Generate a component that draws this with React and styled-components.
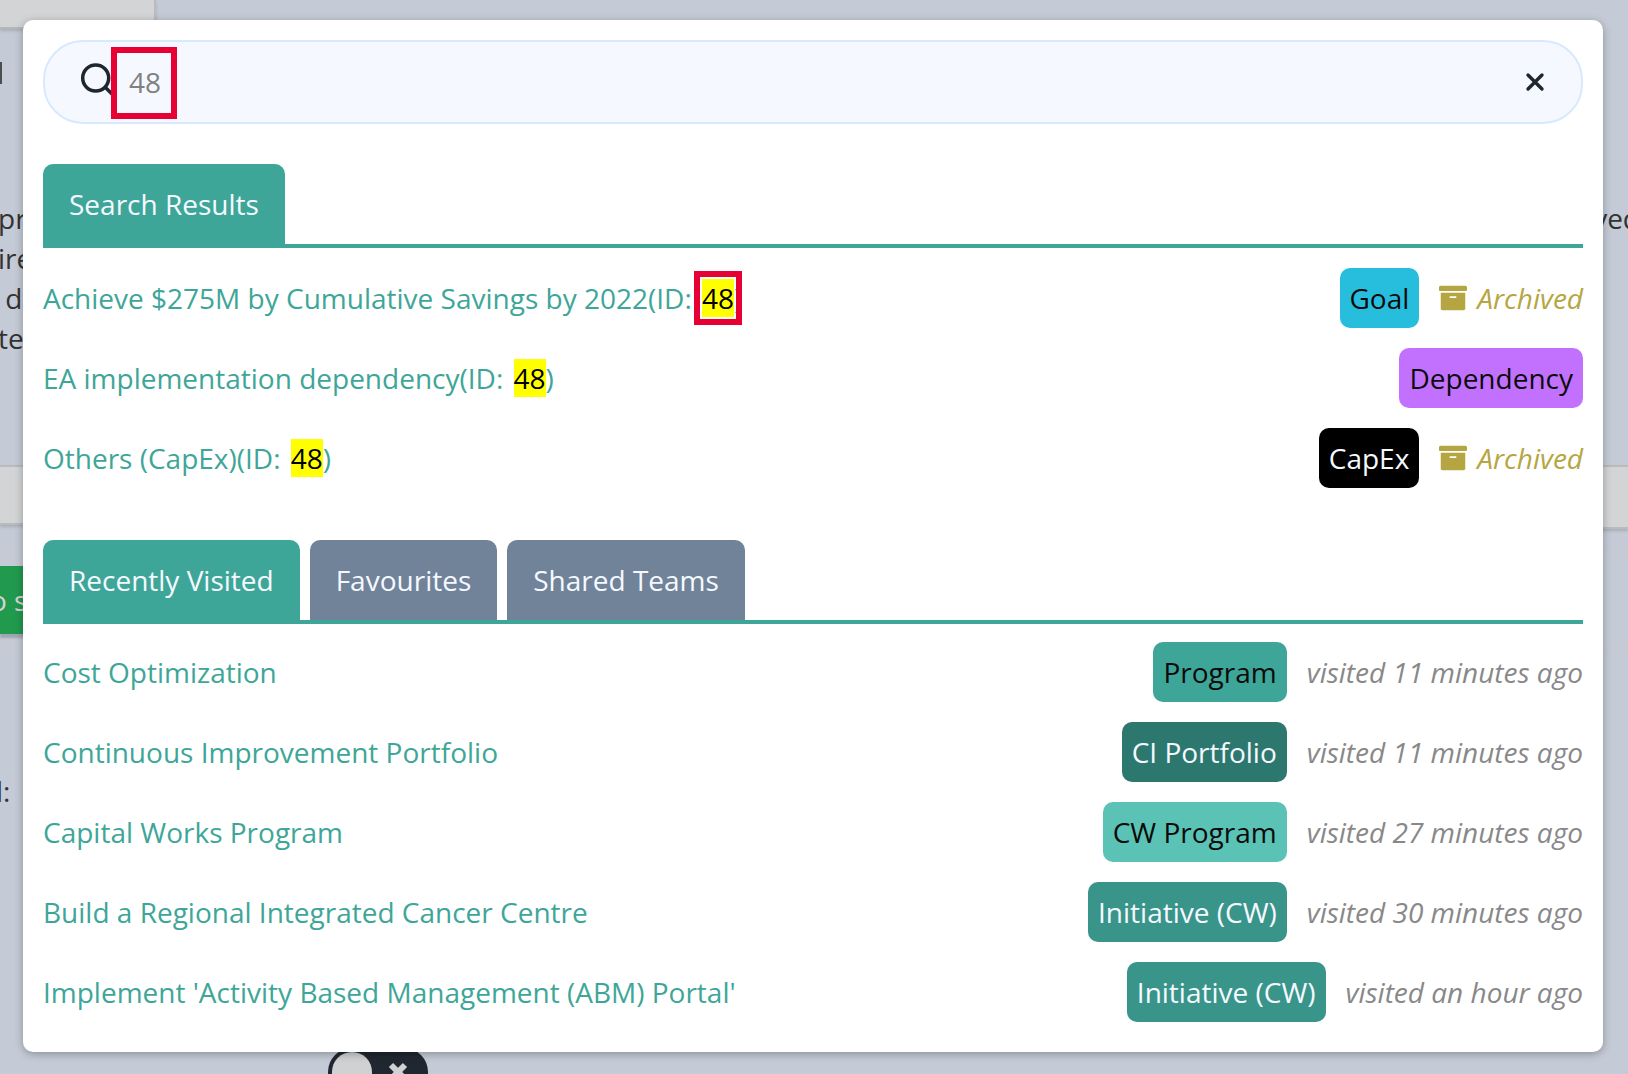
import React from "react";
import styled, { createGlobalStyle, css } from "styled-components";
import { FaArchive } from "react-icons/fa";

const GlobalStyle = createGlobalStyle`
  *,
  *::before,
  *::after {
    box-sizing: border-box;
  }
  body {
    margin: 0;
    font-family: "Open Sans", "Noto Sans", sans-serif;
    font-size: 28px;
    line-height: 40px;
    color: #333;
  }
  button,
  input {
    font: inherit;
  }
`;

const Page = styled.div`
  position: relative;
  height: 100vh;
  overflow: hidden;
  background: #c5cbd6;
`;

/* page behind the dialog */
const Backdrop = styled.div`
  display: flex;
  flex-direction: column;
`;
const TopPanel = styled.div`
  width: 156px;
  height: 29px;
  background: #d3d4d5;
  border-right: 2px solid #b9bbbd;
  border-bottom: 2px solid #b5b7b9;
  box-shadow: 0 2px 3px rgba(0, 0, 0, 0.15);
`;
const Stub = styled.div`
  width: 2px;
  height: 22px;
  margin-top: 33px;
  background: #4a4d52;
`;
const Copy = styled.div`
  display: flex;
  justify-content: space-between;
  margin: 114px -12px 0 -2px;
  height: 160px;
`;
const Lines = styled.div`
  display: flex;
  flex-direction: column;
  white-space: pre;
`;
const Cards = styled.div`
  display: flex;
  align-items: flex-start;
  justify-content: space-between;
  height: 83px;
  margin-top: 107px;
`;
const Card = styled.div`
  width: 50%;
  height: ${(p) => (p.$tall ? 64 : 60)}px;
  background: #d3d4d5;
  border: solid #b9bbbd;
  border-width: 2px 0;
  box-shadow: 0 2px 3px rgba(0, 0, 0, 0.15);
`;
const Dashes = styled.div`
  height: 2px;
  background: repeating-linear-gradient(
    to right,
    transparent 0 4px,
    #cbc9c8 4px 10px
  );
`;
const SaveButton = styled.button`
  align-self: flex-start;
  width: 80px;
  height: 68px;
  margin: 16px 0;
  padding: 0;
  border: 0;
  background: #219a4e;
  box-shadow: 0 4px 2px #a0a6af;
  color: #d3d4d5;
  text-align: left;
  text-indent: -10px;
`;
const FieldLabel = styled.div`
  margin-top: 119px;
  text-indent: -4px;
`;
const Toggle = styled.div`
  display: flex;
  align-items: center;
  justify-content: space-between;
  width: 100px;
  height: 48px;
  margin: 237px 0 0 328px;
  padding: 0 20px 0 4px;
  border-radius: 24px;
  background: #212730;
`;
const Knob = styled.span`
  width: 40px;
  height: 40px;
  border-radius: 50%;
  background: #d0d1d2;
`;

/* dialog */
const Dialog = styled.section`
  position: absolute;
  top: 20px;
  left: 23px;
  right: 25px;
  padding: 20px;
  border-radius: 10px;
  background: #fff;
  box-shadow: 0 2px 8px rgba(0, 0, 0, 0.3);
`;
const SearchBar = styled.div`
  display: flex;
  align-items: center;
  height: 84px;
  padding: 0 30px 0 34px;
  border: 2px solid #d6e9ff;
  border-radius: 40px;
  background: #f5f9ff;
`;
const SearchIcon = styled.svg`
  flex: none;
  width: 32px;
  height: 80px;
`;
const outline = css`
  content: "";
  position: absolute;
  border: 6px solid #e60033;
`;
const SearchField = styled.label`
  position: relative;
  display: flex;
  flex: 1;
  align-items: center;
  height: 80px;
  &::before {
    ${outline}
    top: 5px;
    left: 0;
    width: 66px;
    height: 72px;
    background: #f5f9ff;
  }
`;
const SearchInput = styled.input`
  position: relative;
  width: 100%;
  padding: 0 18px;
  border: 0;
  outline: 0;
  background: transparent;
  color: #808080;
`;
const CloseButton = styled.button`
  display: grid;
  place-items: center;
  width: 32px;
  height: 32px;
  padding: 0;
  border: 0;
  background: transparent;
`;
const Tabs = styled.div`
  display: flex;
  gap: 10px;
  margin-top: 40px;
  border-bottom: 4px solid #3ea698;
`;
const Tab = styled.button`
  height: 80px;
  padding: 0 26px;
  border: 0;
  border-radius: 10px 10px 0 0;
  background: ${(p) => (p.$active ? "#3ea698" : "#718399")};
  color: #f5f9ff;
`;
const List = styled.ul`
  display: flex;
  flex-direction: column;
  gap: 20px;
  margin: 0;
  padding: 20px 0 12px;
  list-style: none;
`;
const VisitedList = styled(List)`
  padding: 18px 0 10px;
`;
const Row = styled.li`
  display: flex;
  align-items: center;
  gap: 20px;
  height: 60px;
`;
const Name = styled.a`
  margin-right: auto;
  color: #3ea698;
  text-decoration: none;
`;
const Mark = styled.mark`
  position: relative;
  margin-left: 3px;
  background: #ff0;
  color: #000;
  ${(p) =>
    p.$outlined &&
    css`
      &::after {
        ${outline}
        inset: -8px;
      }
    `}
`;
const Badge = styled.span`
  padding: 10px;
  border-radius: 10px;
  background: ${(p) => p.$bg};
  color: ${(p) => (p.$light ? "#f5f9ff" : "#0b0b0b")};
`;
const Archived = styled.em`
  display: flex;
  align-items: center;
  gap: 10px;
  color: #b5a642;
`;
const Visited = styled.em`
  color: #888;
`;

const results = [
  {
    name: "Achieve $275M by Cumulative Savings by 2022",
    type: "Goal",
    bg: "#27bedd",
    archived: true,
    outlined: true,
  },
  { name: "EA implementation dependency", type: "Dependency", bg: "#c271ff" },
  { name: "Others (CapEx)", type: "CapEx", bg: "#000", light: true, archived: true },
];

const visited = [
  { name: "Cost Optimization", type: "Program", bg: "#3ea698", when: "11 minutes ago" },
  {
    name: "Continuous Improvement Portfolio",
    type: "CI Portfolio",
    bg: "#2c786e",
    light: true,
    when: "11 minutes ago",
  },
  { name: "Capital Works Program", type: "CW Program", bg: "#5bc3b6", when: "27 minutes ago" },
  {
    name: "Build a Regional Integrated Cancer Centre",
    type: "Initiative (CW)",
    bg: "#399589",
    light: true,
    when: "30 minutes ago",
  },
  {
    name: "Implement 'Activity Based Management (ABM) Portal'",
    type: "Initiative (CW)",
    bg: "#399589",
    light: true,
    when: "an hour ago",
  },
];

export default function App() {
  return (
    <Page>
      <GlobalStyle />
      <Backdrop>
        <TopPanel />
        <Stub />
        <Copy>
          <Lines>
            <span>pr</span>
            <span>ire</span>
            <span> d</span>
            <span>te</span>
          </Lines>
          <Lines>
            <span>ved</span>
          </Lines>
        </Copy>
        <Cards>
          <Card />
          <Card $tall />
        </Cards>
        <Dashes />
        <SaveButton>o s</SaveButton>
        <Dashes />
        <FieldLabel>l:</FieldLabel>
        <Toggle>
          <Knob />
          <svg width="20" height="20" viewBox="0 0 20 20">
            <path d="M3 3l14 14M17 3L3 17" stroke="#d0d1d2" strokeWidth="6" />
          </svg>
        </Toggle>
      </Backdrop>
      <Dialog>
        <SearchBar>
          <SearchIcon viewBox="0 0 32 80" fill="none" stroke="#1e2630" strokeWidth="3.5">
            <circle cx="16.7" cy="36" r="13" />
            <path d="M26 45l10 10" />
          </SearchIcon>
          <SearchField>
            <SearchInput type="text" aria-label="Search" defaultValue="48" />
          </SearchField>
          <CloseButton aria-label="Clear">
            <svg width="20" height="20" viewBox="0 0 20 20">
              <path
                d="M3 3l14 14M17 3L3 17"
                stroke="#1e2630"
                strokeWidth="3.4"
                strokeLinecap="round"
              />
            </svg>
          </CloseButton>
        </SearchBar>
        <Tabs>
          <Tab $active>Search Results</Tab>
        </Tabs>
        <List>
          {results.map((r) => (
            <Row key={r.name}>
              <Name href="#">
                {r.name}(ID: <Mark $outlined={r.outlined}>48</Mark>)
              </Name>
              <Badge $bg={r.bg} $light={r.light}>
                {r.type}
              </Badge>
              {r.archived && (
                <Archived>
                  <FaArchive size={28} />
                  Archived
                </Archived>
              )}
            </Row>
          ))}
        </List>
        <Tabs>
          <Tab $active>Recently Visited</Tab>
          <Tab>Favourites</Tab>
          <Tab>Shared Teams</Tab>
        </Tabs>
        <VisitedList>
          {visited.map((v) => (
            <Row key={v.name}>
              <Name href="#">{v.name}</Name>
              <Badge $bg={v.bg} $light={v.light}>
                {v.type}
              </Badge>
              <Visited>visited {v.when}</Visited>
            </Row>
          ))}
        </VisitedList>
      </Dialog>
    </Page>
  );
}
